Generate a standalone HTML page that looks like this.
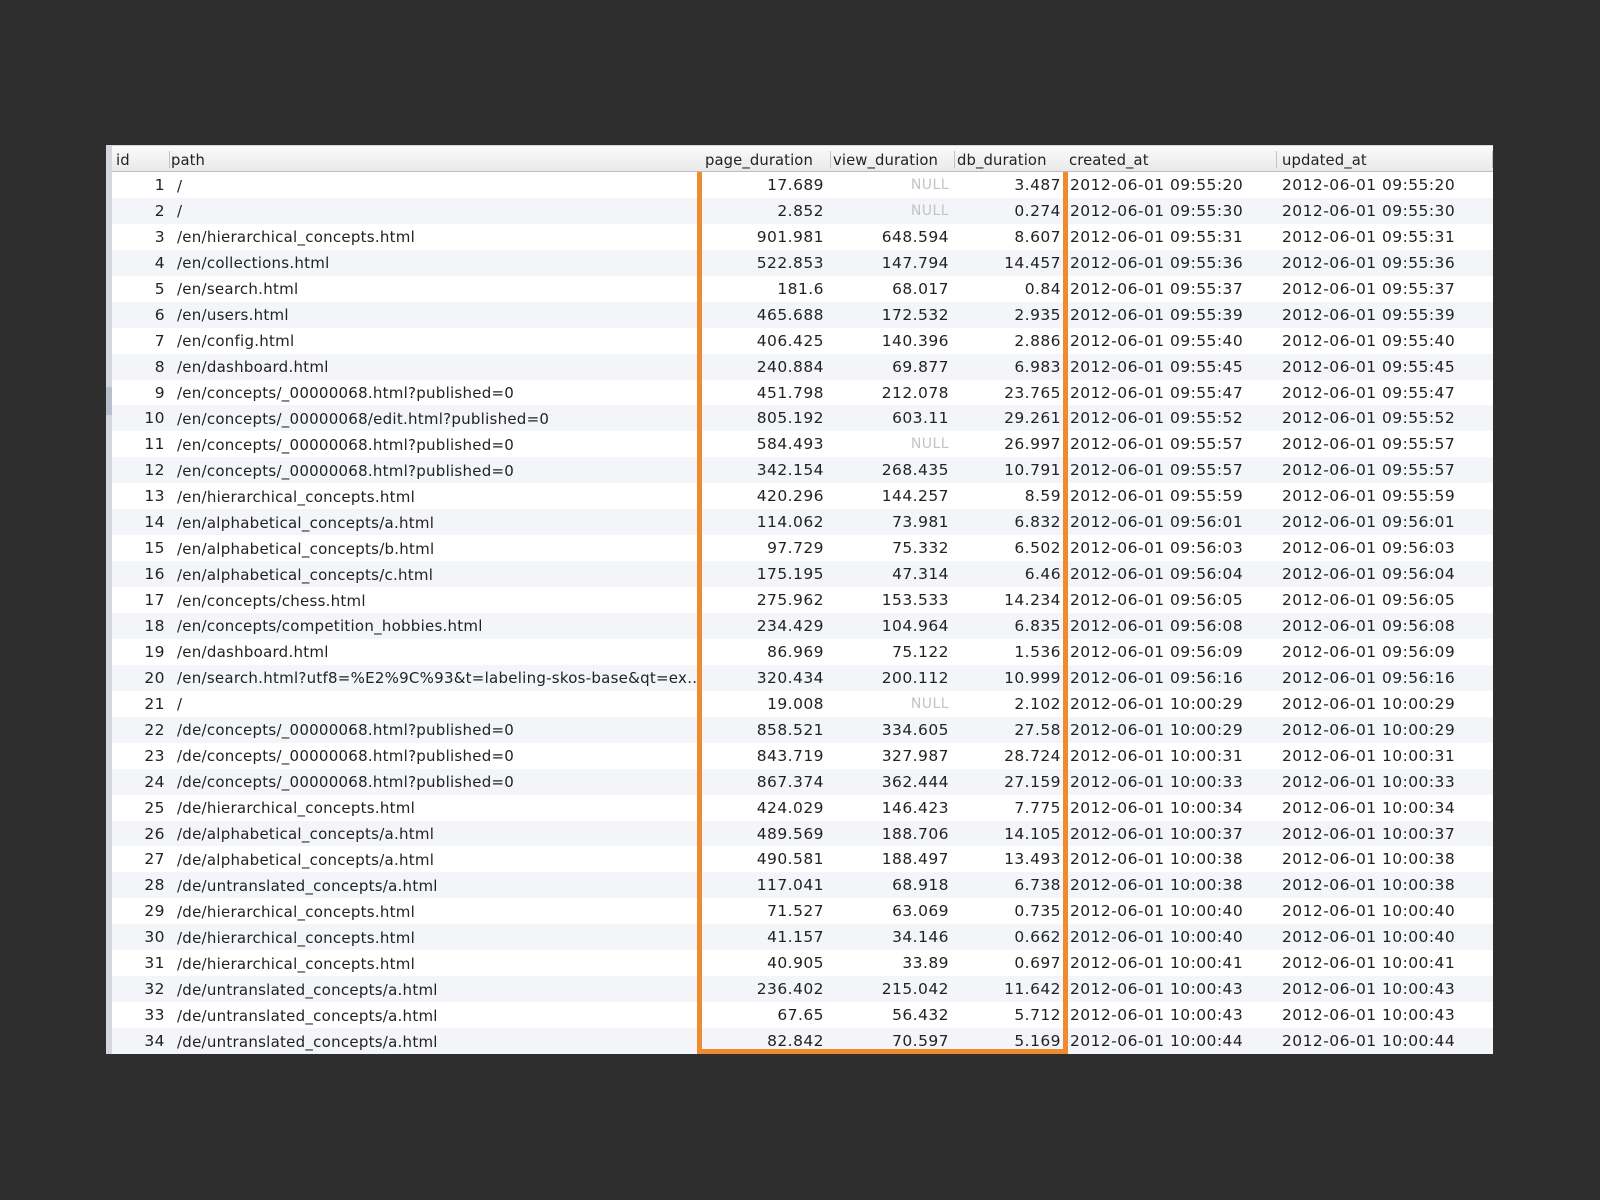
<!DOCTYPE html>
<html><head><meta charset="utf-8"><style>
*{margin:0;padding:0;box-sizing:border-box}
body{width:1600px;height:1200px;background:#2e2e2e;position:relative;overflow:hidden;font-family:"DejaVu Sans","Liberation Sans",sans-serif;font-size:15.5px;letter-spacing:0.45px;color:#222}
#t{position:absolute;left:106px;top:145px;width:1387px;height:909px;background:#fff;overflow:hidden}
#strip{position:absolute;left:0;top:0;width:6px;height:909px;background:#d4d8de}
#strip2{position:absolute;left:0;top:242px;width:6px;height:28px;background:#b8c0cc}
#hd{position:absolute;left:6px;top:0;right:0;height:27px;background:linear-gradient(#fbfbfb,#e9e9e9);border-bottom:1px solid #bdbdbd;border-top:1px solid #d8d8d8;z-index:2}
.h{position:absolute;top:6px;font-size:14.8px;letter-spacing:0.1px;color:#222}
.sep{position:absolute;top:5px;width:1px;height:17px;background:#c4c4c4}
.r{position:absolute;left:6px;right:0;height:25.94px}
.r.o{background:#f3f5f8}
.c{position:absolute;top:4px;white-space:nowrap}
.id{right:1328px;text-align:right}
.p{left:65px;font-size:15px;letter-spacing:0.25px;top:4.5px}
.pg{right:669px}
.vw{right:544px}
.db{right:432px}
.ca{left:958px}
.ua{left:1170px}
.n{color:#c4c4c4;font-size:14px;top:5px}
#box{position:absolute;left:697px;top:145px;width:371px;height:909px;border:5px solid #ef8a2e}
</style></head><body>
<div id="t">
<div id="strip"></div><div id="strip2"></div>
<div id="hd">
<span class="h" style="left:4px">id</span>
<span class="sep" style="left:57px"></span><span class="h" style="left:59px">path</span>
<span class="h" style="left:593px">page_duration</span>
<span class="sep" style="left:718px"></span><span class="h" style="left:721px">view_duration</span>
<span class="sep" style="left:842px"></span><span class="h" style="left:845px">db_duration</span>
<span class="h" style="left:957px">created_at</span>
<span class="sep" style="left:1164px"></span><span class="h" style="left:1170px">updated_at</span>
<span class="sep" style="left:1380px"></span>
</div>
<div id="rows"></div>
</div>
<div id="box"></div>
<script>
(function(){
var d=[
["/","17.689",null,"3.487","09:55:20"],
["/","2.852",null,"0.274","09:55:30"],
["/en/hierarchical_concepts.html","901.981","648.594","8.607","09:55:31"],
["/en/collections.html","522.853","147.794","14.457","09:55:36"],
["/en/search.html","181.6","68.017","0.84","09:55:37"],
["/en/users.html","465.688","172.532","2.935","09:55:39"],
["/en/config.html","406.425","140.396","2.886","09:55:40"],
["/en/dashboard.html","240.884","69.877","6.983","09:55:45"],
["/en/concepts/_00000068.html?published=0","451.798","212.078","23.765","09:55:47"],
["/en/concepts/_00000068/edit.html?published=0","805.192","603.11","29.261","09:55:52"],
["/en/concepts/_00000068.html?published=0","584.493",null,"26.997","09:55:57"],
["/en/concepts/_00000068.html?published=0","342.154","268.435","10.791","09:55:57"],
["/en/hierarchical_concepts.html","420.296","144.257","8.59","09:55:59"],
["/en/alphabetical_concepts/a.html","114.062","73.981","6.832","09:56:01"],
["/en/alphabetical_concepts/b.html","97.729","75.332","6.502","09:56:03"],
["/en/alphabetical_concepts/c.html","175.195","47.314","6.46","09:56:04"],
["/en/concepts/chess.html","275.962","153.533","14.234","09:56:05"],
["/en/concepts/competition_hobbies.html","234.429","104.964","6.835","09:56:08"],
["/en/dashboard.html","86.969","75.122","1.536","09:56:09"],
["/en/search.html?utf8=%E2%9C%93&amp;t=labeling-skos-base&amp;qt=ex\u2026","320.434","200.112","10.999","09:56:16"],
["/","19.008",null,"2.102","10:00:29"],
["/de/concepts/_00000068.html?published=0","858.521","334.605","27.58","10:00:29"],
["/de/concepts/_00000068.html?published=0","843.719","327.987","28.724","10:00:31"],
["/de/concepts/_00000068.html?published=0","867.374","362.444","27.159","10:00:33"],
["/de/hierarchical_concepts.html","424.029","146.423","7.775","10:00:34"],
["/de/alphabetical_concepts/a.html","489.569","188.706","14.105","10:00:37"],
["/de/alphabetical_concepts/a.html","490.581","188.497","13.493","10:00:38"],
["/de/untranslated_concepts/a.html","117.041","68.918","6.738","10:00:38"],
["/de/hierarchical_concepts.html","71.527","63.069","0.735","10:00:40"],
["/de/hierarchical_concepts.html","41.157","34.146","0.662","10:00:40"],
["/de/hierarchical_concepts.html","40.905","33.89","0.697","10:00:41"],
["/de/untranslated_concepts/a.html","236.402","215.042","11.642","10:00:43"],
["/de/untranslated_concepts/a.html","67.65","56.432","5.712","10:00:43"],
["/de/untranslated_concepts/a.html","82.842","70.597","5.169","10:00:44"]];
var h="";
for(var i=0;i<d.length;i++){var r=d[i],ty=(27+i*25.94).toFixed(2);
h+='<div class="r'+(i%2?' o':'')+'" style="top:'+ty+'px">'+
'<span class="c id">'+(i+1)+'</span><span class="c p">'+r[0]+'</span>'+
'<span class="c pg">'+r[1]+'</span>'+
(r[2]?'<span class="c vw">'+r[2]+'</span>':'<span class="c vw n">NULL</span>')+
'<span class="c db">'+r[3]+'</span>'+
'<span class="c ca">2012-06-01 '+r[4]+'</span><span class="c ua">2012-06-01 '+r[4]+'</span></div>';}
document.getElementById("rows").innerHTML=h;
})();
</script>
</body></html>
